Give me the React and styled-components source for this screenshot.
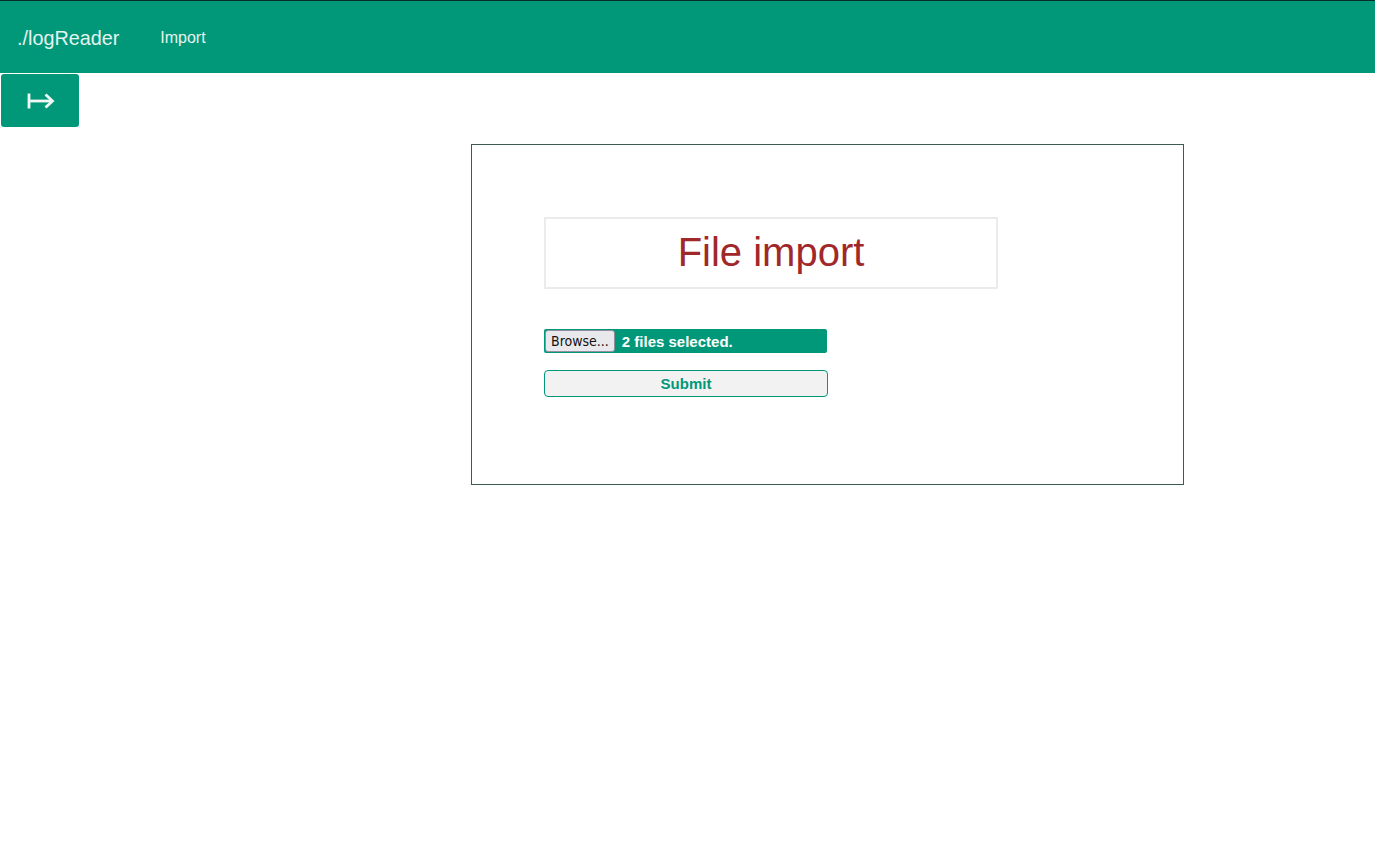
import React from "react";
import styled, { createGlobalStyle } from "styled-components";

const GlobalStyle = createGlobalStyle`
  body {
    margin: 0;
    font-family: "Liberation Sans", Arial, sans-serif;
    background: #fff;
  }
`;

const ArrowIcon = () => (
  <svg width="28" height="18" viewBox="0 0 28 18" fill="none">
    <path d="M2 1.5v15" stroke="#f0f8f5" strokeWidth="2.8" />
    <path d="M2 9h23" stroke="#f0f8f5" strokeWidth="2.8" />
    <path d="M18.5 2.5L25.5 9l-7 6.5" stroke="#f0f8f5" strokeWidth="2.8" />
  </svg>
);

export default function App() {
  return (
    <>
      <GlobalStyle />
      <Header>
        <Brand>./logReader</Brand>
        <NavLink>Import</NavLink>
      </Header>
      <ToggleRow>
        <ToggleBtn aria-label="toggle sidebar">
          <ArrowIcon />
        </ToggleBtn>
      </ToggleRow>
      <Main>
        <Card>
          <TitleBox>File import</TitleBox>
          <Form>
            <FileInput>
              <HiddenInput type="file" multiple />
              <BrowseBtn>Browse...</BrowseBtn>
              <FileText>2 files selected.</FileText>
            </FileInput>
            <SubmitBtn type="button">Submit</SubmitBtn>
          </Form>
        </Card>
      </Main>
    </>
  );
}

const Header = styled.header`
  background: #009879;
  border-top: 1px solid #0b2b27;
  display: flex;
  align-items: center;
  padding: 2px 0 0 17px;
  box-sizing: border-box;
  height: 73px;
  gap: 41px;
`;

const Brand = styled.span`
  color: #e6f3ef;
  font-size: 19.8px;
`;

const NavLink = styled.span`
  color: #e6f3ef;
  font-size: 16px;
`;

const ToggleRow = styled.div`
  padding: 1px 0 0 1px;
`;

const ToggleBtn = styled.button`
  width: 78px;
  height: 53px;
  background: #009879;
  border: none;
  border-radius: 3px;
  display: flex;
  align-items: center;
  justify-content: center;
  padding: 0 0 0 1px;
`;

const Main = styled.main`
  padding: 17px 0 0 471px;
`;

const Card = styled.section`
  border: 1px solid #3f5a50;
  padding: 72px 0 0 72px;
  width: 639px;
  height: 267px;
`;

const TitleBox = styled.h1`
  margin: 0;
  width: 450px;
  height: 66px;
  padding-bottom: 2px;
  border: 2px solid #ebebeb;
  color: #a1282a;
  font-weight: normal;
  font-size: 40px;
  display: flex;
  align-items: center;
  justify-content: center;
`;

const Form = styled.form`
  margin-top: 40px;
  display: flex;
  flex-direction: column;
  gap: 17px;
  width: 284px;
`;

const FileInput = styled.label`
  display: flex;
  align-items: center;
  height: 24px;
  width: 283px;
  background: #009879;
  border-radius: 2px;
  overflow: hidden;
  cursor: pointer;
`;

const HiddenInput = styled.input`
  display: none;
`;

const BrowseBtn = styled.span`
  height: 22px;
  box-sizing: border-box;
  margin-left: 1px;
  padding: 0 5px;
  display: flex;
  align-items: center;
  background: #e9e9ed;
  border: 1px solid #8f8f9d;
  border-radius: 3px;
  font-family: "DejaVu Sans Condensed", "DejaVu Sans", sans-serif;
  font-size: 14px;
  color: #111;
`;

const FileText = styled.span`
  color: #fff;
  font-weight: bold;
  font-size: 15px;
  margin-left: 7px;
`;

const SubmitBtn = styled.button`
  height: 27px;
  width: 284px;
  background: #f2f2f2;
  border: 1px solid #009879;
  border-radius: 4px;
  color: #009879;
  font-family: "Liberation Sans", Arial, sans-serif;
  font-weight: bold;
  font-size: 15px;
  padding: 0;
`;
